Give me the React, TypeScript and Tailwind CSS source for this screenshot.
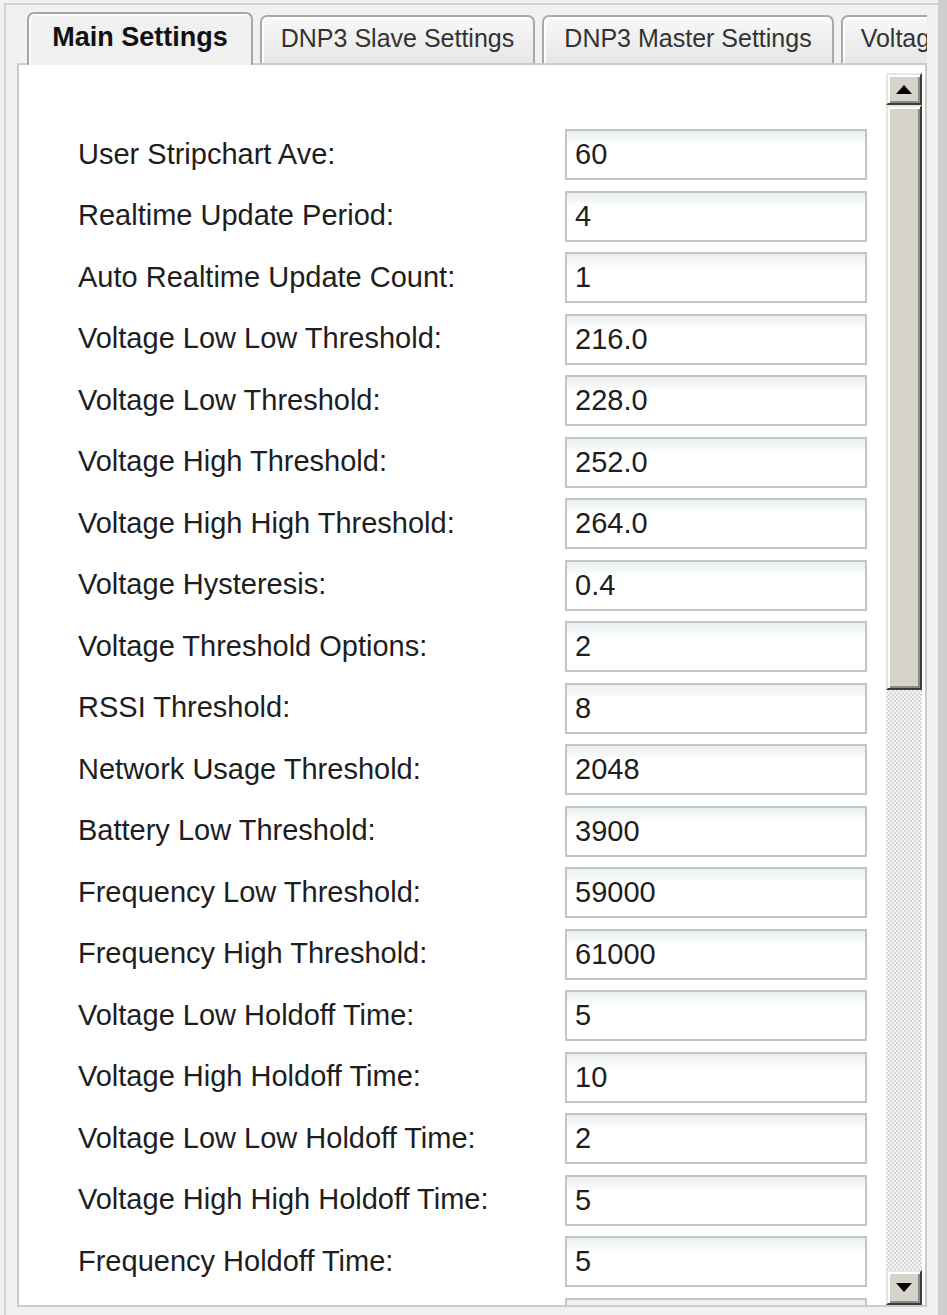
import React from 'react'

const rows: [string, string][] = [
  ['User Stripchart Ave:', '60'],
  ['Realtime Update Period:', '4'],
  ['Auto Realtime Update Count:', '1'],
  ['Voltage Low Low Threshold:', '216.0'],
  ['Voltage Low Threshold:', '228.0'],
  ['Voltage High Threshold:', '252.0'],
  ['Voltage High High Threshold:', '264.0'],
  ['Voltage Hysteresis:', '0.4'],
  ['Voltage Threshold Options:', '2'],
  ['RSSI Threshold:', '8'],
  ['Network Usage Threshold:', '2048'],
  ['Battery Low Threshold:', '3900'],
  ['Frequency Low Threshold:', '59000'],
  ['Frequency High Threshold:', '61000'],
  ['Voltage Low Holdoff Time:', '5'],
  ['Voltage High Holdoff Time:', '10'],
  ['Voltage Low Low Holdoff Time:', '2'],
  ['Voltage High High Holdoff Time:', '5'],
  ['Frequency Holdoff Time:', '5'],
  ['', ''],
]

const tabs = [
  { label: 'DNP3 Slave Settings', w: 'w-[275px]' },
  { label: 'DNP3 Master Settings', w: 'w-[292px]' },
  { label: 'Voltage Settings', w: 'w-[220px]' },
]

function Arrow({ up }: { up?: boolean }) {
  return (
    <svg width="16" height="9" viewBox="0 0 16 9">
      {up ? <polygon points="8,0 16,9 0,9" fill="#000" /> : <polygon points="0,0 16,0 8,9" fill="#000" />}
    </svg>
  )
}

const bevel = 'bg-[#d5d3ca] border-2 border-t-[#e8e6de] border-l-[#e8e6de] border-r-[#3c3c3c] border-b-[#3c3c3c] shadow-[inset_2px_2px_0_#ffffff,inset_-2px_-2px_0_#8a8a86]'

export default function App() {
  return (
    <div className="w-[947px] h-[1315px] bg-[#f1f1f1] flex overflow-hidden font-['Liberation_Sans',Arial,sans-serif] text-[#1e1e1e]">
      <div className="w-[938px] shrink-0 min-w-0 pl-[4px] pt-[3px]">
        <div className="h-full min-w-0 border-l-2 border-t-2 border-[#d3d3d3] pl-[11px] pr-[11px] pt-[7px] flex flex-col">
          {/* tabs */}
          <div className="relative z-10 -mb-[2px] w-full min-w-0 h-[53px] flex items-end gap-[7px] pl-[10px] overflow-hidden">
            <div className="shrink-0 w-[226px] h-[53px] rounded-t-[7px] border-2 border-b-0 border-[#a6a6a6] bg-[#f0f0f0] shadow-[inset_2px_2px_0_#fbfbfb] flex items-center justify-center pb-[4px] text-[27px] font-bold text-[#111]">
              Main Settings
            </div>
            {tabs.map((t) => (
              <div key={t.label}
                className={`shrink-0 ${t.w} h-[48px] mb-[2px] rounded-t-[7px] border-2 border-b-0 border-[#a9a9a9] bg-[linear-gradient(to_bottom,#f8f8f8,#e7e7e7)] shadow-[inset_2px_2px_0_#ffffff] flex items-center justify-center pb-[2px] text-[25px] text-[#333]`}>
                <span className="whitespace-nowrap">{t.label}</span>
              </div>
            ))}
          </div>

          {/* panel */}
          <div className="h-[1244px] w-full min-w-0 border-2 border-[#cbcbcb] bg-white flex">
            <div className="flex-1 min-w-0 overflow-hidden pt-[64px] pl-[59px]">
              <div className="flex flex-col gap-[10.5px]">
                {rows.map(([label, value], i) => (
                  <div key={i} className="h-[51px] flex items-center">
                    <div className="w-[487px] shrink-0 text-[29px] whitespace-nowrap">{label}</div>
                    <input
                      readOnly
                      defaultValue={value}
                      className="w-[302px] shrink-0 h-[51px] border-2 border-[#c3c5c5] bg-[linear-gradient(to_bottom,#e9efef,#ffffff_30%)] pl-[8px] text-[29px] text-[#1e1e1e] outline-none"
                    />
                  </div>
                ))}
              </div>
            </div>

            {/* scrollbar */}
            <div className="w-[36px] shrink-0 mt-[8px] mr-[3px] flex flex-col">
              <div className={`h-[32px] ${bevel} flex items-center justify-center`}>
                <Arrow up />
              </div>
              <div className={`h-[585px] ${bevel}`} />
              <div className="flex-1 bg-[image:repeating-conic-gradient(#d9d9d9_0_25%,#f6f6f6_0_50%)] bg-[length:4px_4px]" />
              <div className={`h-[35px] ${bevel} flex items-center justify-center`}>
                <Arrow />
              </div>
            </div>
          </div>
        </div>
      </div>
      <div className="w-[9px] shrink-0 bg-[#cecece]" />
    </div>
  )
}
